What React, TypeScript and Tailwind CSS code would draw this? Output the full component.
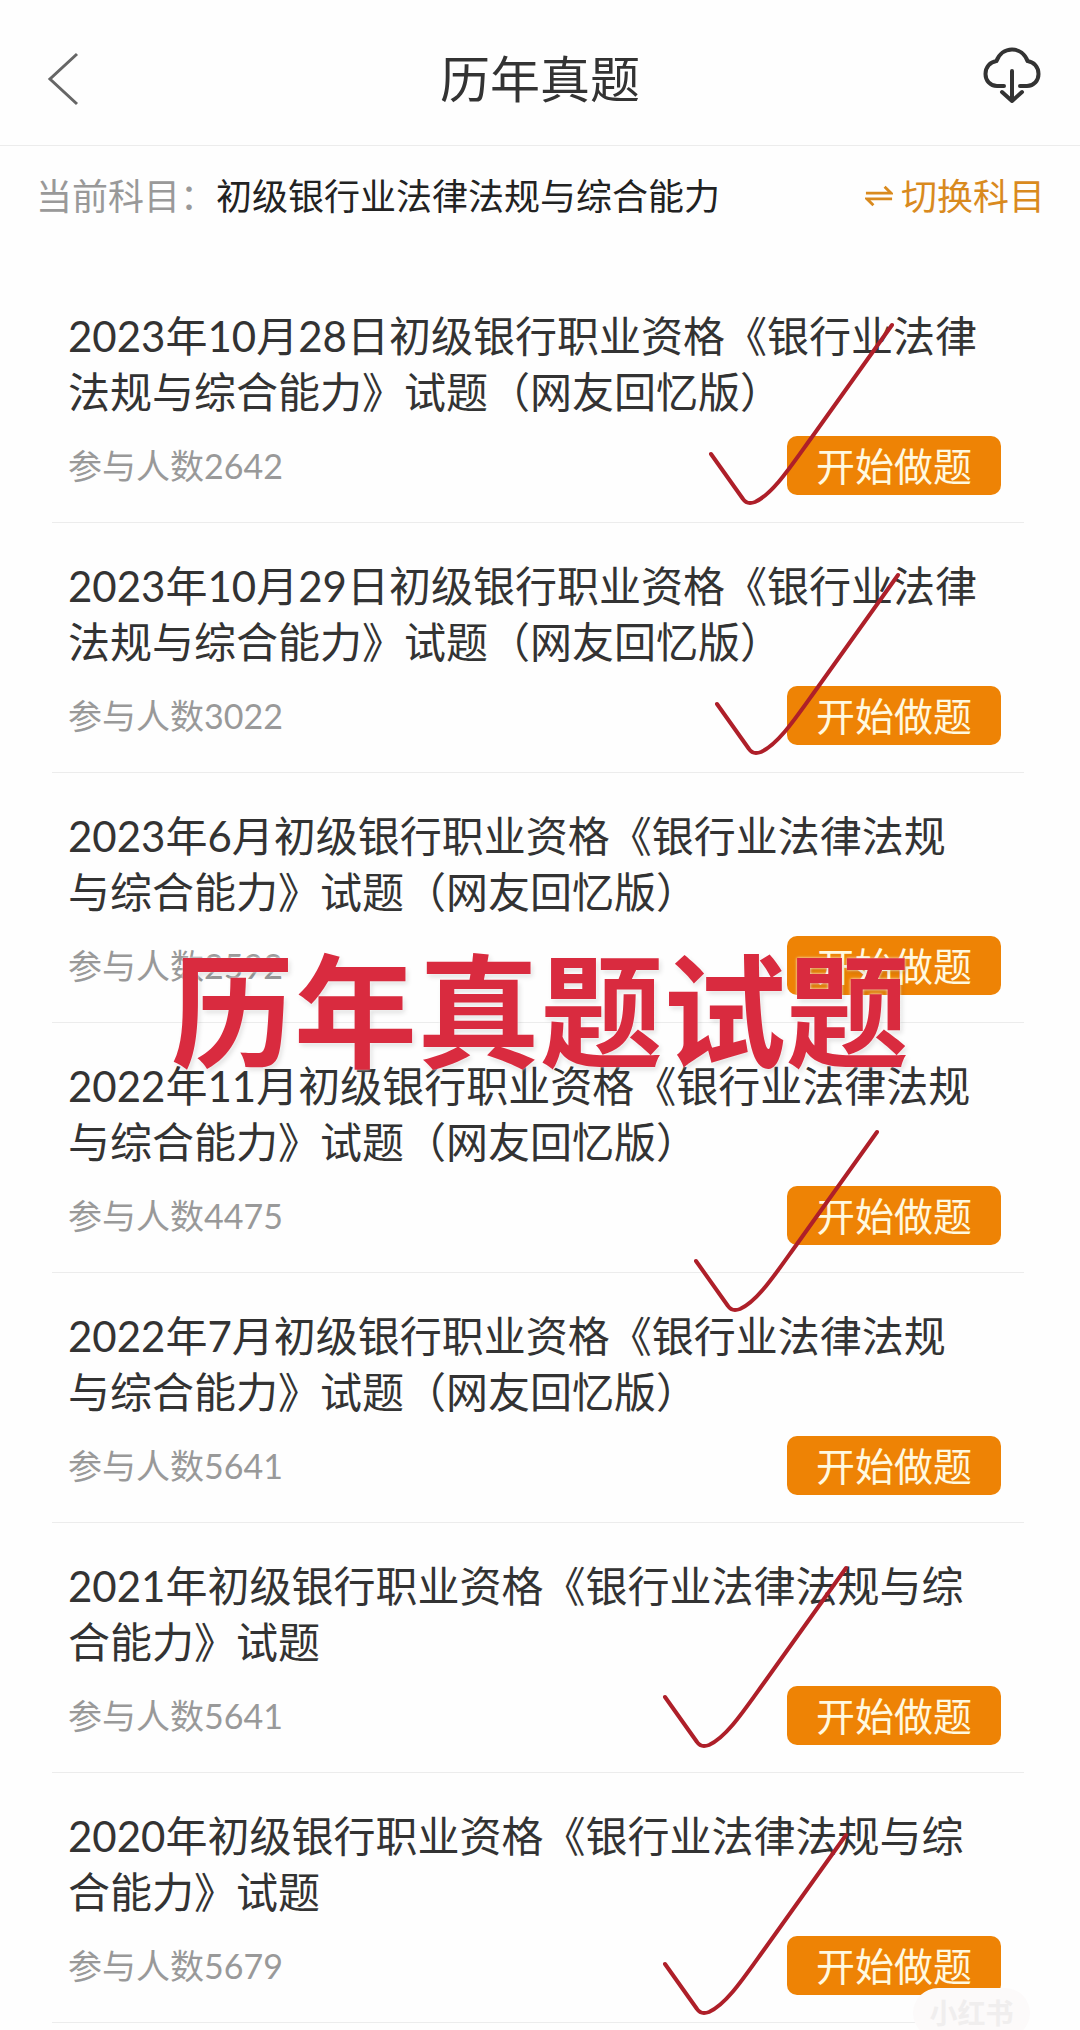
interface Paper {
  title: string;
  count: number;
  // where the pen tick sits over the row, if there is one
  tick?: string;
}

const papers: Paper[] = [
  {
    title: "2023年10月28日初级银行职业资格《银行业法律法规与综合能力》试题（网友回忆版）",
    count: 2642,
    tick: "right-[128px] top-[48px]",
  },
  {
    title: "2023年10月29日初级银行职业资格《银行业法律法规与综合能力》试题（网友回忆版）",
    count: 3022,
    tick: "right-[122px] top-[48px]",
  },
  {
    title: "2023年6月初级银行职业资格《银行业法律法规与综合能力》试题（网友回忆版）",
    count: 2592,
  },
  {
    title: "2022年11月初级银行职业资格《银行业法律法规与综合能力》试题（网友回忆版）",
    count: 4475,
    tick: "right-[143px] top-[105px]",
  },
  {
    title: "2022年7月初级银行职业资格《银行业法律法规与综合能力》试题（网友回忆版）",
    count: 5641,
  },
  {
    title: "2021年初级银行职业资格《银行业法律法规与综合能力》试题",
    count: 5641,
    tick: "right-[174px] top-[41px]",
  },
  {
    title: "2020年初级银行职业资格《银行业法律法规与综合能力》试题",
    count: 5679,
    tick: "right-[174px] top-[58px]",
  },
];

function BackIcon() {
  return (
    <svg width="32" height="54" viewBox="0 0 32 54" fill="none" stroke="#666" strokeWidth="3">
      <path d="M30 2 3 27l27 25" />
    </svg>
  );
}

function CloudDownloadIcon() {
  return (
    <svg
      width="58"
      height="56"
      viewBox="0 0 58 56"
      fill="none"
      stroke="#333"
      strokeWidth="4"
      strokeLinecap="round"
      strokeLinejoin="round"
    >
      <path d="M21 39h-7C7 39 2.500 33.500 2.500 27c0-7 4.500-12 11-13C16 7 22 2.500 29 2.500S42 7 44.500 14c6.500 1 11 6 11 13C55.500 33.500 51 39 44 39h-7" />
      <path d="M29 24v30M19 45l10 9 10-9" />
    </svg>
  );
}

function SwitchIcon() {
  return (
    <svg width="28" height="22" viewBox="0 0 30 22" fill="none" stroke="currentColor" strokeWidth="3">
      <path d="M1 8h27l-7-7M29 14H2l7 7" />
    </svg>
  );
}

function Tick({ className }: { className: string }) {
  return (
    <svg
      className={`absolute z-10 pointer-events-none ${className}`}
      width="189"
      height="187"
      viewBox="0 0 189 187"
      fill="none"
      stroke="#ae1f29"
      strokeWidth="4"
      strokeLinecap="round"
      strokeLinejoin="round"
    >
      <path d="M4 133 36 178Q40 184 48 181C66 173 84 145 105 116L185 4" />
    </svg>
  );
}

function PaperRow({ title, count, tick }: Paper) {
  return (
    <li className="relative border-b border-[#ececec] pt-[35px] pb-[27px] pl-4 pr-[23px]">
      <h2 className="pr-[17px] text-[42px] leading-[56px] text-[#333]">{title}</h2>
      <div className="mt-4 flex items-center justify-between">
        <p className="text-[34px] leading-[56px] text-[#999]">参与人数{count}</p>
        <button
          type="button"
          className="h-[59px] w-[214px] rounded-[10px] bg-[#ee8305] text-[39px] leading-[56px] text-[#fff9e0]"
        >
          开始做题
        </button>
      </div>
      {tick && <Tick className={tick} />}
    </li>
  );
}

export default function App() {
  return (
    <main className="relative min-h-screen overflow-hidden bg-[#fefefe] font-['Lato','Noto_Sans_CJK_SC',sans-serif]">
      <header className="flex h-[146px] items-center justify-between border-b border-[#ececec] pt-3 pl-[47px] pr-[39px]">
        <button type="button" aria-label="返回" className="w-[50px]">
          <BackIcon />
        </button>
        <h1 className="text-[50px] leading-[56px] text-[#333]">历年真题</h1>
        <button type="button" aria-label="下载" className="-mt-2">
          <CloudDownloadIcon />
        </button>
      </header>

      <div className="flex h-[127px] items-start justify-between pt-[22px] pr-[35px] pl-9 text-[36px] leading-[56px]">
        <p className="text-[#222]">
          <span className="text-[#999]">当前科目：</span>初级银行业法律法规与综合能力
        </p>
        <button type="button" className="flex items-center gap-2 text-[#d98a1e]">
          <SwitchIcon />
          切换科目
        </button>
      </div>

      <div className="relative pl-[52px] pr-14">
        <ul>
          {papers.map((paper) => (
            <PaperRow key={paper.title} {...paper} />
          ))}
        </ul>
        <p className="absolute inset-x-0 top-[648px] z-20 text-center text-[123px] leading-[180px] font-bold text-[#d92b3f] [text-shadow:0_0_3px_#fff,2px_3px_5px_rgba(0,0,0,0.12)]">
          历年真题试题
        </p>
      </div>

      <div className="absolute right-[50px] -bottom-2 z-20 flex h-[50px] w-[117px] items-center justify-center rounded-full bg-[#fcfafa] text-[28px] font-bold text-[#f0eeee]">
        小红书
      </div>
    </main>
  );
}
